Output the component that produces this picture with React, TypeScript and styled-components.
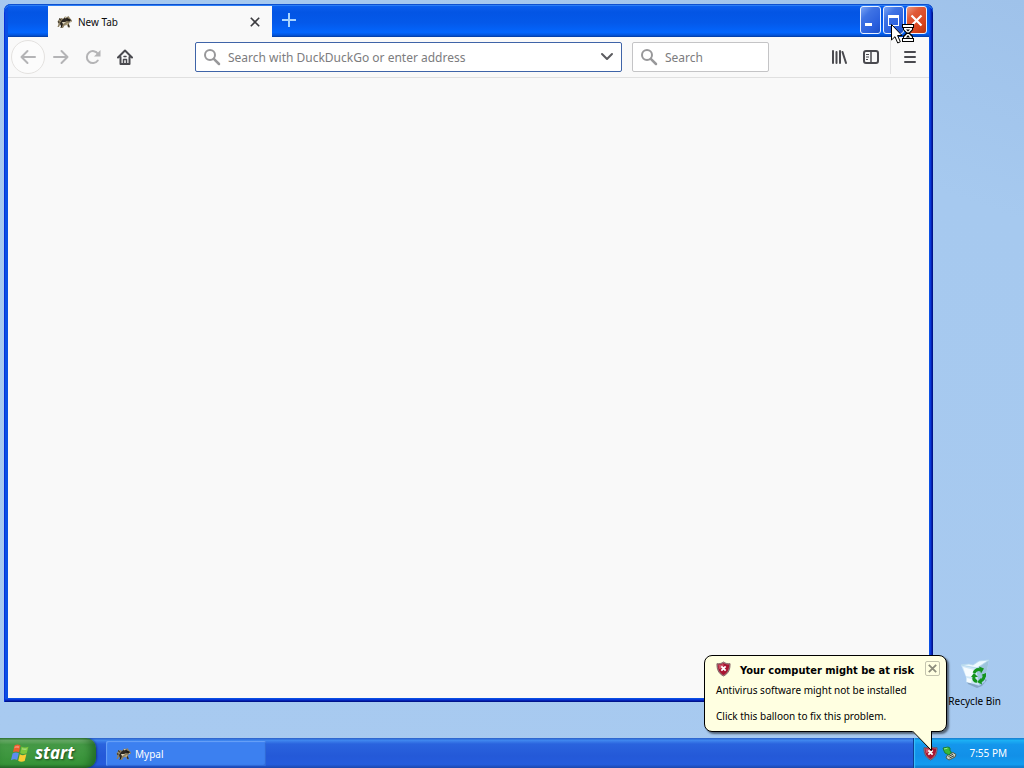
import React from 'react';
import styled, { createGlobalStyle, css } from 'styled-components';

const uiFont = '"Noto Sans", "DejaVu Sans Condensed", sans-serif';

const GlobalStyle = createGlobalStyle`
  *, *::before, *::after { box-sizing: border-box; }
  body { margin: 0; font-family: ${uiFont}; font-size: 10px; color: #000; }
  button, input { font: inherit; color: inherit; margin: 0; }
  h1, p { margin: 0; }
  svg { display: block; flex: none; }
`;

const Screen = styled.div`
  display: flex;
  flex-direction: column;
  height: 100vh;
  overflow: hidden;
`;

const Desktop = styled.main`
  position: relative;
  flex: 1;
  display: flex;
  justify-content: flex-end;
  align-items: flex-end;
  padding: 0 23px 30px 0;
  background: linear-gradient(200deg, #9fc2ea 0%, #a6c9ef 20%, #a8caf0 100%);
`;

const DesktopIcon = styled.button`
  display: flex;
  flex-direction: column;
  align-items: center;
  gap: 4px;
  padding: 0;
  border: 0;
  background: none;
  line-height: 14px;
  white-space: nowrap;
`;

const Window = styled.section`
  position: absolute;
  inset: 4px 91px 36px 4px;
  display: flex;
  flex-direction: column;
  padding: 2px 4px 4px;
  border-radius: 7px 7px 0 0;
  background: #0a4fe4;
  box-shadow: inset 0 1px #0e50d0, inset 0 2px #2b7ff5, inset 1px 0 #0831d9,
    inset -1px -1px #00138c, inset -2px -2px #0422b4, inset -3px -3px #0839d8;
`;

const TitleBar = styled.header`
  display: flex;
  height: 31px;
  padding-left: 40px;
  background: linear-gradient(#0b5fee 0, #0355e4 20%, #0459ea 55%, #0366fd 85%, #0355dc 94%, #023a9e 100%);
`;

const Tab = styled.div`
  display: flex;
  align-items: center;
  width: 224px;
  padding: 0 8px 0 9px;
  gap: 5px;
  background: #f9f9f9;
  color: #0c0c0d;
`;

const TabTitle = styled.span`
  flex: 1;
  line-height: 16px;
`;

const PlainButton = styled.button`
  display: grid;
  place-items: center;
  padding: 0;
  border: 0;
  background: none;
`;

const TabClose = styled(PlainButton)`
  width: 18px;
  height: 18px;
`;

const NewTab = styled(PlainButton)`
  width: 34px;
  height: 28px;
`;

const Captions = styled.div`
  position: relative;
  display: flex;
  gap: 2px;
  margin-left: auto;
  padding-right: 2px;
`;

const CaptionButton = styled.button<{ $close?: boolean }>`
  display: grid;
  place-items: center;
  width: 21px;
  height: 28px;
  padding: 0;
  border: 1px solid #e8f0ff;
  border-radius: 3px;
  background: ${(p) =>
    p.$close
      ? 'linear-gradient(135deg, #ee9a80 0%, #e05a38 30%, #d8451f 70%, #b8360f 100%)'
      : 'linear-gradient(135deg, #7ba5f4 0%, #3f73e4 30%, #2a60de 70%, #1c50c8 100%)'};
`;

const BusyCursor = styled.svg`
  position: absolute;
  left: 31px;
  top: 18px;
  pointer-events: none;
`;

const Toolbar = styled.nav`
  display: flex;
  align-items: center;
  height: 41px;
  padding: 0 3px;
  border-bottom: 1px solid #e0e0e0;
  background: #f9f9f9;
  color: #4a4a4f;
`;

const ToolButton = styled(PlainButton)<{ $faded?: boolean; $round?: boolean }>`
  width: 32px;
  height: 32px;
  color: ${(p) => (p.$faded ? '#b4b4b6' : '#4a4a4f')};
  ${(p) =>
    p.$round &&
    css`
      width: 34px;
      height: 34px;
      border: 1px solid #e4e2e0;
      border-radius: 50%;
      background: #fcfcfc;
    `}
`;

const Fields = styled.div`
  flex: 1;
  display: flex;
  gap: 10px;
  margin: 0 54px;
`;

const Field = styled.label<{ $main?: boolean }>`
  display: flex;
  align-items: center;
  gap: 7px;
  min-width: 0;
  height: 30px;
  padding: 0 7px;
  border: 1px solid ${(p) => (p.$main ? '#3f64a8' : '#c4c4c6')};
  border-radius: 2px;
  background: #fff;
  color: #8c8c8e;
  flex: ${(p) => (p.$main ? '1' : '0 0 137px')};
`;

const FieldInput = styled.input`
  flex: 1;
  min-width: 0;
  padding: 0;
  border: 0;
  outline: 0;
  background: none;
  font-size: 12px;
  &::placeholder {
    color: #7c7c7e;
    opacity: 1;
  }
`;

const MenuSlot = styled.div`
  display: flex;
  align-items: center;
  height: 34px;
  margin-left: 3px;
  padding-left: 3px;
  border-left: 1px solid #e2e2e3;
`;

const Page = styled.div`
  flex: 1;
  background: #f9f9f9;
`;

const Balloon = styled.aside`
  position: absolute;
  right: 77px;
  bottom: 6px;
  width: 243px;
  height: 77px;
  padding: 5px 6px 0 11px;
  border: 1px solid #000;
  border-radius: 8px;
  background: #ffffe1;
  box-shadow: 2px 2px 2px rgba(0, 0, 0, 0.5);
  z-index: 2;
`;

const BalloonHead = styled.header`
  display: flex;
  align-items: flex-start;
  height: 20px;
`;

const BalloonTitle = styled.h1`
  flex: 1;
  padding-left: 9px;
  font-family: "DejaVu Sans Condensed", "Noto Sans", sans-serif;
  font-size: 11px;
  line-height: 20px;
  white-space: nowrap;
`;

const BalloonClose = styled(PlainButton)`
  width: 15px;
  height: 15px;
  border: 1px solid #c4c4ae;
  border-radius: 2px;
`;

const BalloonText = styled.p`
  height: 26px;
  line-height: 18px;
  white-space: nowrap;
`;

const BalloonTail = styled.svg`
  position: absolute;
  right: 11px;
  top: 74px;
`;

const Taskbar = styled.footer`
  display: flex;
  height: 30px;
  color: #fff;
  background: linear-gradient(#2a5fc8 0, #3f86ee 8%, #2a63de 20%, #2459d8 60%, #245cdc 88%, #1c47ad 100%);
`;

const StartButton = styled.button`
  display: flex;
  align-items: center;
  gap: 5px;
  width: 96px;
  padding: 0 0 0 10px;
  border: 0;
  border-radius: 0 10px 10px 0;
  background: linear-gradient(#3a7f3c 0, #74b672 8%, #469b47 22%, #3b953c 70%, #3a9a3c 88%, #2c6f2e 100%);
  box-shadow: inset -5px 0 8px rgba(15, 80, 20, 0.6), 1px 0 2px rgba(0, 0, 40, 0.4);
  font-size: 17px;
  font-weight: 700;
  font-style: italic;
  line-height: 24px;
  text-shadow: 1px 1px 2px #1d4a1e;
`;

const TaskButton = styled.button`
  display: flex;
  align-items: center;
  gap: 3px;
  width: 160px;
  height: 25px;
  margin: 3px 0 0 10px;
  padding: 0 10px;
  border: 0;
  border-radius: 2px;
  background: #3c80f0;
  box-shadow: inset 1px 1px 1px #6aa2f8, inset -1px -1px 1px #2f68d4;
  line-height: 16px;
`;

const Tray = styled.div`
  display: flex;
  align-items: center;
  gap: 4px;
  margin-left: auto;
  padding: 0 17px 0 9px;
  border-left: 1px solid #0d3f92;
  background: linear-gradient(#1172c8 0, #1cb0f4 8%, #1496ec 22%, #1290e8 60%, #129cf0 88%, #0d72c4 100%);
  box-shadow: inset 1px 0 1px #3cc0fa;
`;

const Clock = styled.time`
  padding-left: 8px;
`;

const Raccoon = () => (
  <svg width="16" height="16" viewBox="0 0 16 16" aria-hidden="true">
    <path d="M.5 7.500l2-3 2.500-.5 1 1 2-2.500 2 .5 1.500-1 1 1.500 2.500 3-.5 1.500-2 .5-.5 1.500 1 3.500h-2L10 11 7.500 11.500 6 14H3.500l1-3-2 .5L2 13H.5l1-3z" fill="#8d8064" />
    <path d="M5 6l2.500-2 2.500-.5 2 1.500 2 1-1.500 1.500-3-.5-3 2-1.500 3H4l-1-3z" fill="#2c2620" />
    <path d="M8 3l2 .5-1.500 1zM12.500 7.500l1.500-1v1zM5 8l4 .3-3 1.700z" fill="#efe6cc" />
    <path d="M2 6.500l1.500.7L2 9zM8 10.500l3-1.500 .5 1.500z" fill="#cbb98c" />
    <path d="M2.500 4.500l1 1.800M1 8h1.800M4.800 11.500L4 13.500M11.500 10.500l.5 2.500M10.500 5.500l3 .8" stroke="#14110e" />
  </svg>
);

const Shield = () => (
  <svg width="15" height="16" viewBox="0 0 16 16" aria-hidden="true">
    <path d="M8 .5c2 1.600 4.200 2 7 1.800.2 6-1.600 10.500-7 13.200C2.600 12.800.8 8.300 1 2.300 3.800 2.500 6 2.100 8 .5z" fill="#a58288" stroke="#6e4a50" strokeWidth=".8" />
    <path d="M8 1.500c1.800 1.200 3.700 1.600 6.100 1.600-.1 5.100-1.600 8.800-6.100 11.300-4.500-2.500-6-6.200-6.100-11.300C4.300 3.100 6.200 2.700 8 1.500z" fill="#a81430" />
    <path d="M2.600 3.800C4.800 3.800 6.500 3.300 8 2.300v4.500L3.200 8z" fill="#d05468" />
    <path d="M5.700 5.200l4.600 4.600M10.300 5.200L5.700 9.800" stroke="#fff" strokeWidth="1.900" />
  </svg>
);

const Magnifier = () => (
  <svg width="18" height="18" viewBox="0 0 18 18" fill="none" stroke="#98989a" aria-hidden="true">
    <circle cx="7" cy="7" r="5" strokeWidth="2" />
    <path d="M10.800 10.800l5.200 5.200" strokeWidth="2.500" strokeLinecap="round" />
  </svg>
);

const Flag = () => (
  <svg width="20" height="20" viewBox="0 0 20 20" aria-hidden="true">
    <path d="M4.500 2.500q3-1.800 6 0L9 9.300Q6 7.600 3 9.300z" fill="#ee5c2c" />
    <path d="M11.500 3.500q3 1.800 7 .2l-1.800 6.500q-3.500 1.600-6.500-.2z" fill="#7cc83c" />
    <path d="M2.600 10.500q3.200-1.800 6.200-.2L7.200 17Q4.200 15.400 1 17.200z" fill="#5c8cf0" />
    <path d="M9.800 11.200q3 1.800 6.600.1l-1.700 6.700q-3.500 1.700-6.500-.2z" fill="#f8cc34" />
    <path d="M4.800 3.600q2.500-1.300 4.500-.4l-.5 2q-2-1-4.600 0zM12.300 5q2 .9 4.600.3l-.4 1.500q-2.600.6-4.600-.2z" fill="#fff" opacity=".3" />
  </svg>
);

const Bin = () => (
  <svg width="32" height="32" viewBox="0 0 32 32" aria-hidden="true">
    <path d="M8 24l12 4 6-4v-3l2 1-5 6-5 2-9-4z" fill="#6f8ea8" opacity=".6" />
    <path d="M2 7l14 3L30 2l-4 20-6 5-13-3 0-5z" fill="#cfe7f7" />
    <path d="M17 10L30 2l-4 20-6 5z" fill="#9cc4dc" />
    <path d="M2 7l8-1 4 1 6-4 10-1-12 8z" fill="#eef9ff" stroke="#b4d8ec" strokeWidth=".8" />
    <path d="M4 9l11 3-2 7-6-1zM8 20l5 1-1 4-4-1z" fill="#f6fcff" />
    <g fill="none" stroke="#14951c" strokeWidth="3">
      <path d="M15 15q2-5 7-3M25 16q1 5-4 7.500M18 23.500q-4-1-3-5" />
    </g>
    <path d="M20 8.500l5 2-3 5zM22 20l-4 4 5 2.500zM12 19l3-4 4 4zM22.500 17l4.500-2v4z" fill="#14951c" />
  </svg>
);

const Device = () => (
  <svg width="15" height="15" viewBox="0 0 15 15" aria-hidden="true">
    <path d="M5 9.500l6-3 3 2-1 2.500-6 3-3-2z" fill="#cfd2c4" stroke="#4c5c4c" />
    <path d="M6.500 10.500l4.500-2.200M7.500 12l4.500-2.200" stroke="#38443c" />
    <path d="M1 2l5-1 2 1v3l1.500 1-2.500 3-4-2-1-2z" fill="#38b838" stroke="#177424" strokeWidth=".8" />
    <path d="M2 3l3.500-.8" stroke="#9cec8c" />
  </svg>
);

export default function App() {
  return (
    <Screen>
      <GlobalStyle />
      <Desktop>
        <DesktopIcon>
          <Bin />
          Recycle Bin
        </DesktopIcon>

        <Window aria-label="Mypal">
          <TitleBar>
            <Tab>
              <Raccoon />
              <TabTitle>New Tab</TabTitle>
              <TabClose aria-label="Close tab">
                <svg width="10" height="10" viewBox="0 0 10 10" stroke="#3c3c40" strokeWidth="1.600">
                  <path d="M.8.800l8.400 8.400M9.200.800L.8 9.200" />
                </svg>
              </TabClose>
            </Tab>
            <NewTab aria-label="New tab">
              <svg width="14" height="14" viewBox="0 0 14 14" stroke="#a8d4ff" strokeWidth="2">
                <path d="M7 0v14M0 7h14" />
              </svg>
            </NewTab>
            <Captions>
              <CaptionButton aria-label="Minimize">
                <svg width="13" height="13" viewBox="0 0 13 13">
                  <path d="M1 9h7v3H1z" fill="#fff" />
                </svg>
              </CaptionButton>
              <CaptionButton aria-label="Maximize">
                <svg width="13" height="13" viewBox="0 0 13 13">
                  <path d="M1 1h11v11H1zM2 4v7h9V4z" fill="#fff" fillRule="evenodd" />
                </svg>
              </CaptionButton>
              <CaptionButton $close aria-label="Close">
                <svg width="13" height="13" viewBox="0 0 13 13" stroke="#fff" strokeWidth="2.200">
                  <path d="M1.500 1.500l10 10M11.500 1.500l-10 10" />
                </svg>
              </CaptionButton>
              <BusyCursor width="26" height="22" viewBox="0 0 26 22" aria-hidden="true">
                <path d="M.5.5v15.500l3.500-3.300 2.700 6.300 2.600-1.200L6.600 11.500H11z" fill="#fff" stroke="#000" />
                <path d="M11 0h12v4h-1v2l-3 3 3 3v2h1v4H11v-4h1v-2l3-3-3-3V4h-1z" fill="#000" />
                <path d="M12 1h10v2H12zM12 15h10v2H12zM13 4h8v1.500l-3 3h-2l-3-3zM16 10h2l3 3v1h-8v-1z" fill="#fff" />
                <path d="M15 5.500h4l-2 2zM17 11l2 2.500h-4z" fill="#000" />
              </BusyCursor>
            </Captions>
          </TitleBar>

          <Toolbar>
            <ToolButton $faded $round aria-label="Back">
              <svg width="16" height="16" viewBox="0 0 16 16" fill="none" stroke="currentColor" strokeWidth="2" strokeLinecap="round" strokeLinejoin="round">
                <path d="M15 8H1.500M7.500 2l-6 6 6 6" />
              </svg>
            </ToolButton>
            <ToolButton $faded aria-label="Forward">
              <svg width="16" height="16" viewBox="0 0 16 16" fill="none" stroke="currentColor" strokeWidth="2" strokeLinecap="round" strokeLinejoin="round">
                <path d="M1 8h13.500M8.500 2l6 6-6 6" />
              </svg>
            </ToolButton>
            <ToolButton $faded aria-label="Reload">
              <svg width="16" height="16" viewBox="0 0 16 16" fill="none" stroke="currentColor" strokeWidth="2" strokeLinecap="round">
                <path d="M12.800 11.500A6 6 0 1 1 13 5" />
                <path d="M15.500 1v6.500H9z" fill="currentColor" stroke="none" />
              </svg>
            </ToolButton>
            <ToolButton aria-label="Home">
              <svg width="16" height="16" viewBox="0 0 16 16" fill="none" stroke="currentColor" strokeWidth="2" strokeLinejoin="round" strokeLinecap="round">
                <path d="M1 8.500l7-7 7 7M3.500 8v7h9V8" />
                <path d="M6.500 15v-4.500h3V15zM7 7.500h2" strokeWidth="1.500" />
              </svg>
            </ToolButton>
            <Fields>
              <Field $main>
                <Magnifier />
                <FieldInput aria-label="Address" placeholder="Search with DuckDuckGo or enter address" />
                <PlainButton aria-label="Show history">
                  <svg width="14" height="10" viewBox="0 0 14 10" fill="none" stroke="#5c5c60" strokeWidth="2" strokeLinecap="round" strokeLinejoin="round">
                    <path d="M2 2l5 5 5-5" />
                  </svg>
                </PlainButton>
              </Field>
              <Field>
                <Magnifier />
                <FieldInput aria-label="Search" placeholder="Search" />
              </Field>
            </Fields>
            <ToolButton aria-label="Library">
              <svg width="16" height="16" viewBox="0 0 16 16" stroke="currentColor" strokeWidth="2" strokeLinecap="round">
                <path d="M2 2v12M5.500 3v11M9 2v12M11.500 3l3.500 11" />
              </svg>
            </ToolButton>
            <ToolButton aria-label="Sidebars">
              <svg width="16" height="16" viewBox="0 0 16 16" fill="none" stroke="currentColor" strokeWidth="2">
                <rect x="1" y="2" width="14" height="12" rx="2" />
                <path d="M8 2v12" strokeWidth="1.500" />
                <path d="M3 5.500h3M3 8h3M3 10.500h2" strokeWidth="1" />
              </svg>
            </ToolButton>
            <MenuSlot>
              <ToolButton aria-label="Open menu">
                <svg width="14" height="14" viewBox="0 0 14 14" stroke="currentColor" strokeWidth="2" strokeLinecap="round">
                  <path d="M2 2h10M2 7h10M2 12h10" />
                </svg>
              </ToolButton>
            </MenuSlot>
          </Toolbar>
          <Page />
        </Window>

        <Balloon role="alert">
          <BalloonHead>
            <Shield />
            <BalloonTitle>Your computer might be at risk</BalloonTitle>
            <BalloonClose aria-label="Dismiss">
              <svg width="9" height="9" viewBox="0 0 9 9" stroke="#8c8c7c" strokeWidth="1.800">
                <path d="M.8.800l7.400 7.400M8.200.800L.8 8.200" />
              </svg>
            </BalloonClose>
          </BalloonHead>
          <BalloonText>Antivirus software might not be installed</BalloonText>
          <BalloonText>Click this balloon to fix this problem.</BalloonText>
          <BalloonTail width="24" height="23" viewBox="0 0 24 23" aria-hidden="true">
            <path d="M1 0v1l20 20V0z" fill="#ffffe1" />
            <path d="M1.500 1L20.500 20.500V1" fill="none" stroke="#000" />
          </BalloonTail>
        </Balloon>
      </Desktop>

      <Taskbar>
        <StartButton>
          <Flag />
          start
        </StartButton>
        <TaskButton>
          <Raccoon />
          Mypal
        </TaskButton>
        <Tray>
          <Shield />
          <Device />
          <Clock>7:55 PM</Clock>
        </Tray>
      </Taskbar>
    </Screen>
  );
}
